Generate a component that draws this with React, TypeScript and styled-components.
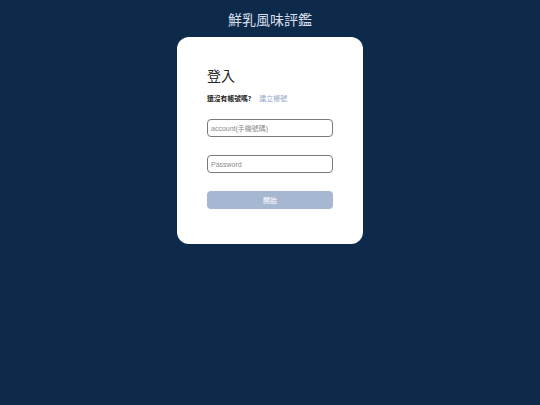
import styled, { createGlobalStyle } from "styled-components";

const GlobalStyle = createGlobalStyle`
  html, body {
    margin: 0;
    padding: 0;
    background: #0e2a4a;
    font-family: "Noto Sans CJK TC", "Liberation Sans", sans-serif;
  }
  * {
    box-sizing: border-box;
  }
`;

const Wrapper = styled.div`
  width: 540px;
  height: 405px;
  background: #0e2a4a;
  display: flex;
  flex-direction: column;
  align-items: center;
`;

const Header = styled.h1`
  margin: 0;
  height: 37px;
  display: flex;
  align-items: center;
  justify-content: center;
  font-size: 14px;
  font-weight: 400;
  color: #d7dfea;
`;

const Card = styled.div`
  width: 186px;
  background: #ffffff;
  border-radius: 12px;
  padding: 28px 30px 35px;
  display: flex;
  flex-direction: column;
`;

const Title = styled.h2`
  margin: 0;
  font-size: 14px;
  font-weight: 400;
  line-height: 20px;
  color: #222;
`;

const Hint = styled.div`
  margin-top: 8px;
  display: flex;
  align-items: center;
  gap: 8px;
  font-size: 6.8px;
  line-height: 10px;
`;

const HintText = styled.span`
  font-weight: 700;
  color: #222;
`;

const LinkText = styled.a`
  color: #8fa3c9;
  text-decoration: none;
  font-size: 7px;
`;

const Form = styled.form`
  margin-top: 16px;
  display: flex;
  flex-direction: column;
  gap: 18px;
`;

const Input = styled.input`
  width: 100%;
  height: 18px;
  border: 1px solid #7a7a7a;
  border-radius: 4px;
  padding: 0 3px;
  font-family: "Liberation Sans", "Noto Sans CJK TC", sans-serif;
  font-size: 7px;
  color: #333;
  outline: none;
  &::placeholder {
    color: #8a8a8a;
  }
`;

const Button = styled.button`
  width: 100%;
  height: 18px;
  border: none;
  border-radius: 4px;
  background: #a6b7d2;
  color: #ffffff;
  font-family: "Noto Sans CJK TC", sans-serif;
  font-size: 7px;
  padding: 0;
`;

function App() {
  return (
    <Wrapper>
      <GlobalStyle />
      <Header>鮮乳風味評鑑</Header>
      <Card>
        <Title>登入</Title>
        <Hint>
          <HintText>還沒有帳號嗎?</HintText>
          <LinkText href="#">建立帳號</LinkText>
        </Hint>
        <Form onSubmit={(e) => e.preventDefault()}>
          <Input type="text" placeholder="account(手機號碼)" />
          <Input type="password" placeholder="Password" />
          <Button type="submit">開始</Button>
        </Form>
      </Card>
    </Wrapper>
  );
}

export default App;
